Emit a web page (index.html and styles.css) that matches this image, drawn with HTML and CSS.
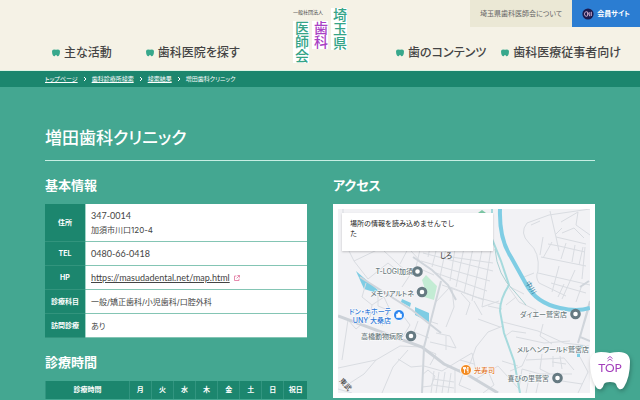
FILE: index.html
```html
<!DOCTYPE html>
<html lang="ja">
<head>
<meta charset="utf-8">
<meta name="viewport" content="width=device-width, initial-scale=1">
<title>増田歯科クリニック</title>
<link rel="stylesheet" href="styles.css">
</head>
<body>
<svg class="defs" aria-hidden="true">
  <symbol id="tooth" viewBox="0 0 8 8"><path d="M0 2.4Q0 0.5 2 0.5Q3.2 0.5 4 0.8Q4.800 0.5 6 0.5Q8 0.500 8 2.400Q8 4.600 7 6.400Q6.400 7.400 5.400 7.200Q4.800 7 4.600 6.300Q4 5.800 3.400 6.300Q3.200 7 2.600 7.200Q1.600 7.400 1 6.400Q0 4.600 0 2.400Z" fill="#38a88c"/></symbol>
  <symbol id="arrow" viewBox="0 0 4 6"><path d="M1 1L3 3L1 5" fill="none" stroke="#fff"/></symbol>
</svg>

<header class="header">
  <nav class="nav nav-left">
    <a href="#"><svg><use href="#tooth"/></svg>主な活動</a>
    <a href="#"><svg><use href="#tooth"/></svg>歯科医院を探す</a>
  </nav>
  <a class="logo" href="#">
    <span class="logo-left"><small>一般社団法人</small><span class="logo-pair"><b>医師会</b><b class="purple">歯科</b></span></span>
    <b>埼玉県</b>
  </a>
  <div class="utility">
    <a class="about" href="#">埼玉県歯科医師会について</a>
    <a class="member" href="#">
      <svg viewBox="0 0 12 12"><circle cx="6" cy="6" r="5.6" fill="#1b1b50"/><path d="M5 3.6Q2.4 3.6 2.4 6T5 8.4M5.5 8.3V3.8L7.8 8.2V4M9.4 3.8V8" fill="none" stroke="#c9a9c9" stroke-width=".9"/></svg>会員サイト</a>
  </div>
  <nav class="nav nav-right">
    <a href="#"><svg><use href="#tooth"/></svg>歯のコンテンツ</a>
    <a href="#"><svg><use href="#tooth"/></svg>歯科医療従事者向け</a>
  </nav>
</header>

<nav class="crumbs">
  <a href="#">トップページ</a><svg><use href="#arrow"/></svg>
  <a href="#">歯科診療所検索</a><svg><use href="#arrow"/></svg>
  <a href="#">検索結果</a><svg><use href="#arrow"/></svg>
  <span>増田歯科クリニック</span>
</nav>

<main class="main">
  <h1>増田歯科クリニック</h1>
  <div class="columns">
    <div>
      <section>
        <h2>基本情報</h2>
        <table class="info">
          <tr><th scope="row">住所</th><td><span class="latin">347-0014</span><br>加須市川口120-4</td></tr>
          <tr><th scope="row">TEL</th><td class="latin">0480-66-0418</td></tr>
          <tr><th scope="row">HP</th><td class="latin"><a href="#">https://masudadental.net/map.html</a><svg viewBox="0 0 6 6"><path d="M2.4 1H.5V5.5H5V3.6M3.4.5H5.5V2.6M5.5.5L2.6 3.4" fill="none" stroke="#e0709a" stroke-width=".8"/></svg></td></tr>
          <tr><th scope="row">診療科目</th><td>一般/矯正歯科/小児歯科/口腔外科</td></tr>
          <tr><th scope="row">訪問診療</th><td>あり</td></tr>
        </table>
      </section>
      <section>
        <h2>診療時間</h2>
        <table class="hours">
          <tr><th class="first" scope="col">診療時間</th><th scope="col">月</th><th scope="col">火</th><th scope="col">水</th><th scope="col">木</th><th scope="col">金</th><th scope="col">土</th><th scope="col">日</th><th class="last" scope="col">祝日</th></tr>
        </table>
      </section>
    </div>
    <section>
      <h2>アクセス</h2>
      <div class="map">
        <svg class="canvas" viewBox="0 0 252 184">
          <rect width="252" height="184" fill="#f2f2f5"/>
          <path d="M84 71L88 66L99 77L96 91L83 87L87 80Z" fill="#c3ecd4"/>
          <path d="M140 4L144 1L148 4Z" fill="#7cc6a4"/>
          <g fill="#7fcde4">
            <path d="M18 62L41 82L36 83L26 80Z"/>
            <path d="M64 90L73 94L72 98L63 93Z"/>
            <path d="M77 98L91 104V113L77 106Z"/>
            <path d="M238 137L245 136V139L242 140V148H239V140Z"/>
          </g>
          <g class="minor">
            <path d="M5 0V30L16 52L30 70M16 52L62 30L84 54M46 42L72 66L64 78M30 70L50 54L60 62M72 36L62 55M84 32L78 58L96 66M93 34L90 48M100 34L94 58M109 34L102 68M118 34L112 72M127 34L118 78M136 34L126 84M145 36L134 92M153 40L144 98M85 44L155 62M83 52L152 72M98 64L149 82M104 76L146 91M113 48L155 54"/>
            <path d="M97 94L112 78L138 88L163 95M114 80L116 98L108 118M123 84L132 94L128 106M136 92L144 106M144 98L161 92M168 96L178 88M165 113L200 122L226 134L251 137M165 117L150 123L138 138L132 155L120 162"/>
            <path d="M28 74L24 88L34 96L32 108L18 120L10 111L4 151M34 96L46 88L52 101M40 83L40 97L50 101M52 101L44 117M63 104L72 116L64 129M80 112L76 123L91 129M91 112L100 115M98 124L112 127L118 139L92 133M108 127V141M86 140L98 145L92 156M0 159L38 151L62 137L84 138M38 151L26 165L12 174M70 141L55 158L44 184M60 150L73 158L84 157M86 157L104 162L122 151L136 155M122 151L134 144L138 162M84 166L90 161L97 167L93 177L84 178M96 162L93 184M101 163L98 184M107 163L104 184M113 164L110 184M95 170L116 173M95 176L116 179M117 160V184M126 162L121 176L133 181"/>
            <path d="M189 14L211 6L252 0M189 14Q181 24 191 34Q202 43 200 62Q197 68 201 74L228 87M186 68L196 64M200 64L252 76M202 12L193 16M212 2L218 28L248 35M218 28L221 42M210 35L221 37L247 43M205 28L202 46M223 13L240 3L238 16L252 26M224 24L236 19L246 29M224 19L218 25M214 33L205 49M228 34L223 50M237 36L234 53M245 38L241 56M203 48L248 57M221 57L214 83M237 61L224 90M213 74L248 84M247 38L244 70M226 75L220 88M244 76L238 93"/>
            <path d="M150 97L164 100M169 76L181 93L198 101L196 110M140 110L162 118M178 128L206 134L232 132M190 144L184 157L172 162M188 151L226 149L236 161M204 145L202 160L212 165M215 147V158M222 147L224 160M214 153L228 155M184 160L202 165L234 165M184 160L181 179M192 164L188 184M202 166L198 184M224 172L244 175M242 148L250 163L240 184M205 115L202 127L214 135M166 128L174 122L188 124M164 152L180 157M138 170L160 157L181 180M150 162L156 176L145 184M0 180L14 184M172 78L186 85"/>
          </g>
          <path class="major" d="M0 107L84 138L106 155L130 166L160 184"/>
          <path class="road" d="M22 68L74 101L103 124M75 48L94 61L110 76L118 91M103 72L86 138L84 184M242 78L251 72M252 92L242 128L252 132M250 101L240 134"/>
          <path class="stream" d="M154 0V30L163 52L171 76Q162 90 162 102L166 124L176 152L182 184"/>
          <path class="canal" d="M157 40Q159 66 177 83L188 96"/>
          <path class="river" d="M162 0Q161 30 173 48L188 75Q198 94 222 99Q239 103 252 99"/>
          <g class="dark"><text transform="translate(1 172) rotate(48)">東武</text><text x="102" y="49">しろ</text></g>
          <text class="water" transform="translate(187 74) rotate(58)">中川</text>
          <g class="label">
            <text x="75" y="65">T-LOGI加須</text>
            <text x="76" y="87">メモリアルトネ</text>
            <text x="65" y="130">高橋動物病院</text>
            <text x="229" y="108">ダイエー鷲宮店</text>
            <text x="251" y="143">メルヘンワールド鷲宮店</text>
            <text x="211" y="172">喜びの里鷲宮</text>
            <g class="blue"><text x="53" y="105">ドン・キホーテ</text><text x="53" y="114">UNY 大桑店</text></g>
            <text class="orange" x="157" y="164">光寿司</text>
          </g>
          <g class="pins">
            <circle cx="79.500" cy="62.500" r="3.800"/><circle cx="84" cy="83" r="3.800"/><circle cx="73" cy="127" r="3.800"/><circle cx="237.500" cy="105" r="3.800"/><circle cx="219.500" cy="169" r="3.800"/>
          </g>
          <circle cx="61" cy="106" r="5.500" fill="#2b85ee" stroke="#fff"/><path d="M58.500 105H63.500V108.500H58.500ZM60 105V103.500H62V105" fill="#fff" stroke="#fff" stroke-width=".6"/>
          <circle cx="128" cy="161" r="5.500" fill="#f38b22" stroke="#fff"/><path d="M126.500 158V164M125.500 158V160H127.500V158M130 164V158Q128.800 159 129 161.500H130" fill="none" stroke="#fff" stroke-width=".9"/>
        </svg>
        <p class="notice">場所の情報を読み込めませんでした</p>
      </div>
    </section>
  </div>
</main>

<a class="top" href="#">
  <svg viewBox="0 0 42 40" aria-hidden="true"><path d="M1 11Q1 1 12 1Q17 1 21 2Q25 1 30 1Q41 1 41 11Q41 26 35 36Q33 39 30 38Q28 37 27 33Q26 31 21 31Q16 31 15 33Q14 37 12 38Q9 39 7 36Q1 26 1 11Z" fill="#fff"/><path d="M18.500 7.500L21 5.500L23.500 7.500M18.500 10L21 8L23.500 10" fill="none" stroke="#a33dbb" stroke-width=".9"/></svg>
  <span>TOP</span>
</a>
</body>
</html>
```
FILE: styles.css
```css
* { box-sizing: border-box; }

body {
  margin: 0;
  background: #44a791;
  color: #444;
  font-family: Inter, "Noto Sans CJK JP", sans-serif;
  font-size: 8px;
  line-height: 14px;
  font-feature-settings: "palt";
}

a { color: inherit; text-decoration: none; }
svg { display: block; flex: none; }
.defs { display: none; }

.header {
  display: grid;
  grid-template-columns: 1fr auto 1fr;
  grid-template-rows: 27px 43px;
  background: #f5f2e6;
  border-bottom: 1px solid #dff3e4;
}

.nav {
  display: flex;
  align-items: center;
  grid-row: 2;
  padding-top: 9px;
  font-size: 12px;
  font-weight: 500;
  white-space: nowrap;
}
.nav a { display: flex; align-items: center; gap: 4px; }
.nav svg { width: 8px; height: 8px; }
.nav-left { grid-column: 1; gap: 34px; padding-left: 52px; }
.nav-right { grid-column: 3; justify-content: flex-end; gap: 15px; padding-right: 19px; }

.logo {
  display: flex;
  align-items: flex-start;
  gap: 3px;
  grid-column: 2;
  grid-row: 1 / 3;
  padding-top: 8px;
  color: #35a487;
}
.logo b {
  background: #fff;
  font-size: 14px;
  font-weight: 500;
  line-height: 16px;
  writing-mode: vertical-rl;
}
.logo .purple { color: #a940c4; }
.logo small { color: #444; font-size: 5px; line-height: 8px; }
.logo-left { display: flex; flex-direction: column; gap: 5px; }
.logo-pair { display: flex; align-items: flex-start; gap: 3px; }

.utility {
  display: flex;
  grid-column: 3;
  grid-row: 1;
  justify-content: flex-end;
  font-size: 7px;
  white-space: nowrap;
}
.utility a { display: flex; align-items: center; padding: 0 10px; }
.about { background: #ebe8d5; color: #666; }
.member { gap: 3px; background: #2b7dd2; color: #fff; font-weight: 700; }
.member svg { width: 12px; height: 12px; }

.crumbs {
  display: flex;
  align-items: center;
  gap: 5px;
  padding: 1px 45px;
  background: #1c866e;
  color: #fff;
  font-size: 6px;
}
.crumbs a { text-decoration: underline; }
.crumbs svg { width: 4px; height: 6px; }

.main { padding: 38px 45px 0; }
h1 {
  margin: 0;
  padding-bottom: 9px;
  border-bottom: 1px solid #c7eee3;
  color: #fff;
  font-size: 17px;
  font-weight: 500;
  line-height: 26px;
}
h2 {
  margin: 0;
  padding: 14px 0 9px;
  color: #fff;
  font-size: 13px;
  font-weight: 700;
  line-height: 20px;
}
.columns { display: grid; grid-template-columns: 1fr 1fr; gap: 26px; }

table { width: 100%; border-collapse: separate; border-spacing: 0; }
th { background: #1c866e; color: #fff; font-size: 7px; font-weight: 700; }
.info th { width: 41px; padding: 0; border-right: 1px solid #a2d5c9; border-bottom: 1px solid #32947d; }
.info td { padding: 5px 5px 4px; border-bottom: 1px solid #84c5b4; background: #fff; }
.info td a { text-decoration: underline; }
.info td svg { display: inline-block; width: 6px; height: 6px; margin-left: 4px; }
.info .latin { font-family: Lato, sans-serif; font-size: 9px; }
.info span.latin { line-height: 1; }
.hours { table-layout: fixed; }
.hours th { height: 18px; padding: 0; border-left: 1px solid #329580; }
.hours .first { width: 32%; }
.hours .last { width: 9%; }

.map { position: relative; padding: 5px; background: #fff; }
.canvas { width: 100%; height: auto; font-size: 7px; }
.minor, .road, .major, .stream, .canal, .river { fill: none; }
.minor { stroke: #d9dce1; stroke-width: 1px; }
.road { stroke: #d0d5db; stroke-width: 2px; }
.major { stroke: #cdd2d8; stroke-width: 3px; }
.stream { stroke: #a6dadd; stroke-width: 2px; }
.canal { stroke: #aacfd0; stroke-width: 1px; }
.river { stroke: #7fcde4; stroke-width: 4px; }
.dark { fill: #4a4a4a; font-weight: 500; }
.water { fill: #2f7f9e; }
.label {
  fill: #6c7b80;
  font-weight: 500;
  paint-order: stroke;
  stroke: #fff;
  stroke-width: 1px;
  text-anchor: end;
}
.blue { fill: #2f79d8; }
.orange { fill: #e0752a; }
.pins { fill: #fff; stroke: #667a82; stroke-width: 3px; }

.notice {
  position: absolute;
  top: 9px;
  left: 9px;
  width: 151px;
  margin: 0;
  padding: 6px 38px 12px 8px;
  background: #fff;
  box-shadow: 0 1px 2px #0003;
  color: #222;
  font-size: 7px;
  font-feature-settings: normal;
  line-height: 10px;
}

.top {
  position: fixed;
  right: 9px;
  bottom: 9px;
  width: 42px;
  color: #a33dbb;
  filter: drop-shadow(1px 2px 2px #0004);
}
.top span {
  position: absolute;
  top: 10px;
  left: 0;
  width: 100%;
  font-family: Lato, sans-serif;
  font-size: 12px;
  line-height: 14px;
  text-align: center;
}
```
